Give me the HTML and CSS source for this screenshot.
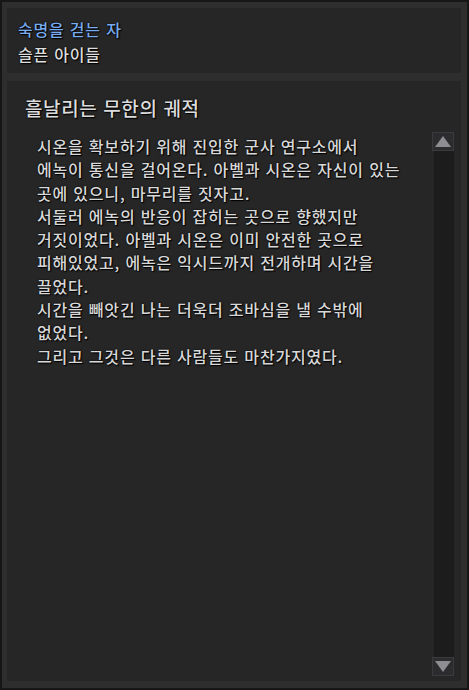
FILE: index.html
```html
<!DOCTYPE html>
<html lang="ko">
<head>
  <meta charset="UTF-8">
  <meta name="viewport" content="width=device-width, initial-scale=1.0">
  <title>흘날리는 무한의 궤적</title>
  <link rel="stylesheet" href="styles.css">
</head>
<body>
  <div class="frame">
    <!-- Quest header -->
    <div class="box header-box">
      <div class="quest-title">숙명을 걷는 자</div>
      <div class="quest-chapter">슬픈 아이들</div>
    </div>

    <!-- Story panel -->
    <div class="box story-box">
      <h1 class="story-title">흘날리는 무한의 궤적</h1>
      <div class="story-row">
        <div class="story-text">
          <p>시온을 확보하기 위해 진입한 군사 연구소에서<br>에녹이 통신을 걸어온다. 아벨과 시온은 자신이 있는<br>곳에 있으니, 마무리를 짓자고.</p>
          <p>서둘러 에녹의 반응이 잡히는 곳으로 향했지만<br>거짓이었다. 아벨과 시온은 이미 안전한 곳으로<br>피해있었고, 에녹은 익시드까지 전개하며 시간을<br>끌었다.</p>
          <p>시간을 빼앗긴 나는 더욱더 조바심을 낼 수밖에<br>없었다.</p>
          <p>그리고 그것은 다른 사람들도 마찬가지였다.</p>
        </div>
        <div class="scrollbar">
          <div class="scroll-btn">
            <svg width="16" height="11" viewBox="0 0 16 11"><path d="M8 0 L16 11 L0 11 Z" fill="#8e8e92"/></svg>
          </div>
          <div class="scroll-track"></div>
          <div class="scroll-btn down">
            <svg width="16" height="11" viewBox="0 0 16 11"><path d="M0 0 L16 0 L8 11 Z" fill="#8e8e92"/></svg>
          </div>
        </div>
      </div>
    </div>
  </div>
</body>
</html>
```

FILE: styles.css
```css
html, body {
  margin: 0;
  background-color: #121212;
}
body {
  font-family: "Noto Sans CJK KR", "Noto Sans", sans-serif;
  font-weight: 500;
  color: #dcdcdc;
}
.frame {
  box-sizing: border-box;
  width: 469px;
  height: 690px;
  border: 2px solid #161616;
  background-color: #2e2e2e;
  padding: 6px 6px 7px 5px;
  display: flex;
  flex-direction: column;
  gap: 8px;
}
.box {
  background-color: #262626;
}
.header-box {
  height: 65px;
  box-sizing: border-box;
  padding: 9px 0 0 11px;
}
.quest-title,
.quest-chapter {
  font-size: 16px;
  line-height: 25px;
  letter-spacing: 0.8px;
  text-shadow: 0 0 2px #000, 1px 1px 1px #000;
}
.quest-title {
  color: #78acee;
}
.quest-chapter {
  color: #dedede;
}
.story-box {
  flex: 1;
  display: flex;
  flex-direction: column;
  padding: 14px 7px 5px 18px;
}
.story-title {
  margin: 0 0 11px;
  font-size: 19px;
  font-weight: 500;
  line-height: 26px;
  letter-spacing: 0.6px;
  color: #dcdcdc;
  text-shadow: 0 0 2px #000, 1px 1px 1px #000;
}
.story-row {
  flex: 1;
  display: flex;
}
.story-text {
  flex: 1;
  padding: 3px 0 0 12px;
  font-size: 16px;
  line-height: 23.3px;
  letter-spacing: 0.8px;
  color: #d8d8d8;
  text-shadow: 0 0 2px #000, 1px 1px 1px #000;
}
.story-text p {
  margin: 0;
}
.scrollbar {
  width: 22px;
  display: flex;
  flex-direction: column;
}
.scroll-btn {
  box-sizing: border-box;
  height: 19px;
  border: 1px solid #3a3a3c;
  background-color: #2c2c2e;
  display: flex;
  align-items: center;
  justify-content: center;
}
.scroll-track {
  flex: 1;
  margin-left: 2px;
  background-color: #1c1c1c;
}
```
